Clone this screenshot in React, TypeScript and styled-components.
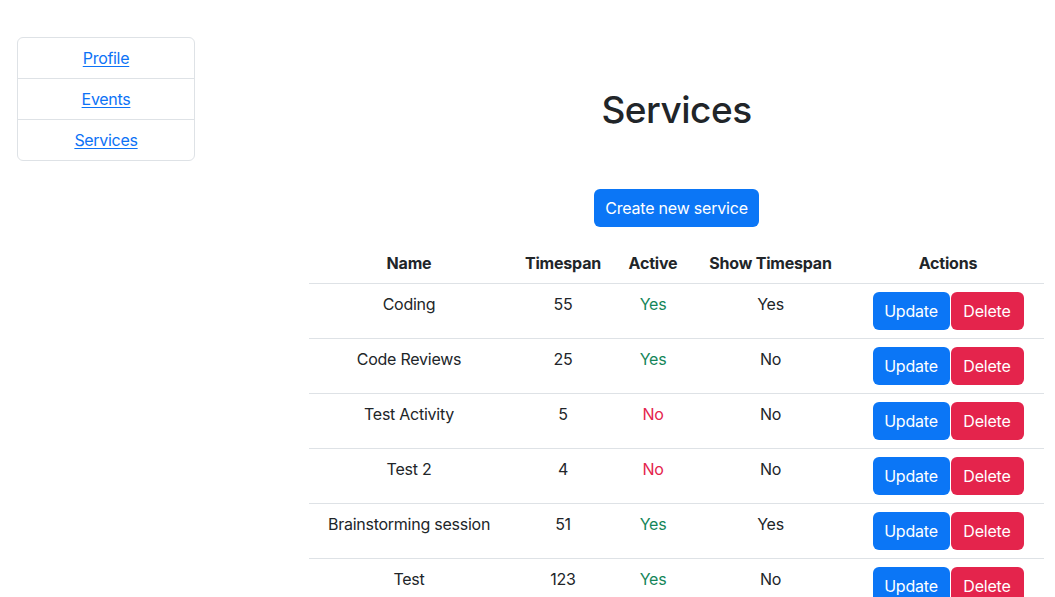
import React from 'react';
import styled, { createGlobalStyle } from 'styled-components';

const GlobalStyle = createGlobalStyle`
  html, body {
    margin: 0;
    padding: 0;
    background: #fff;
  }
  body {
    font-family: Inter, "Noto Sans", "Liberation Sans", sans-serif;
    font-size: 16px;
    line-height: 1.5;
    color: #212529;
  }
`;

type Service = {
  id: number;
  name: string;
  timespan: number;
  active: boolean;
  showTimespan: boolean;
};

const services: Service[] = [
  { id: 1, name: 'Coding', timespan: 55, active: true, showTimespan: true },
  { id: 2, name: 'Code Reviews', timespan: 25, active: true, showTimespan: false },
  { id: 3, name: 'Test Activity', timespan: 5, active: false, showTimespan: false },
  { id: 4, name: 'Test 2', timespan: 4, active: false, showTimespan: false },
  { id: 5, name: 'Brainstorming session', timespan: 51, active: true, showTimespan: true },
  { id: 6, name: 'Test', timespan: 123, active: true, showTimespan: false },
];

const navItems = ['Profile', 'Events', 'Services'];

const Page = styled.div`
  display: flex;
  align-items: flex-start;
  padding: 0 11px 0 17px;
  height: 597px;
  overflow: hidden;
`;

const SideNav = styled.ul`
  list-style: none;
  margin: 37px 0 0;
  padding: 0;
  width: 178px;
  border: 1px solid #dee2e6;
  border-radius: 6px;
  box-sizing: border-box;
`;

const SideNavItem = styled.li`
  height: 40px;
  display: flex;
  align-items: center;
  justify-content: center;

  & + & {
    border-top: 1px solid #dee2e6;
  }
`;

const NavLink = styled.a`
  color: #0d72f6;
  text-decoration: underline;
  text-underline-offset: 2px;
  font-size: 16px;
  letter-spacing: -0.3px;
`;

const Main = styled.main`
  margin-left: auto;
  width: 735px;
  display: flex;
  flex-direction: column;
  align-items: center;
`;

const Heading = styled.h1`
  margin: 86px 0 0;
  font-size: 37px;
  font-weight: 500;
  line-height: 48px;
  letter-spacing: -0.5px;
`;

const Button = styled.button<{ $variant: 'primary' | 'danger' }>`
  border: none;
  border-radius: 6px;
  height: 38px;
  padding: 0 12px;
  font-family: inherit;
  font-size: 16px;
  letter-spacing: -0.2px;
  white-space: nowrap;
  color: #fff;
  background: ${(p) => (p.$variant === 'primary' ? '#0b76f6' : '#e4244c')};
  cursor: pointer;
`;

const CreateButton = styled(Button)`
  margin-top: 55px;
  width: 165px;
  padding: 0;
`;

const Table = styled.table`
  margin-top: 16px;
  width: 735px;
  border-collapse: collapse;
  table-layout: fixed;
`;

const Th = styled.th<{ $w: number }>`
  width: ${(p) => p.$w}px;
  padding: 8px 0;
  font-weight: 700;
  letter-spacing: -0.2px;
  text-align: center;
  border-bottom: 1px solid #dee2e6;
  line-height: 24px;
`;

const Row = styled.tr`
  border-bottom: 1px solid #dee2e6;
`;

const Td = styled.td<{ $tone?: 'yes' | 'no' }>`
  padding: 8px 0;
  text-align: center;
  vertical-align: top;
  line-height: 24px;
  letter-spacing: -0.25px;
  color: ${(p) => (p.$tone === 'yes' ? '#148659' : p.$tone === 'no' ? '#e4244c' : '#212529')};
`;

const Actions = styled.div`
  display: flex;
  justify-content: center;
  gap: 1px;
`;

const UpdateButton = styled(Button)`
  width: 77px;
  padding: 0;
`;

const DeleteButton = styled(Button)`
  width: 73px;
  padding: 0;
`;

const columns = [
  { label: 'Name', w: 200 },
  { label: 'Timespan', w: 108 },
  { label: 'Active', w: 72 },
  { label: 'Show Timespan', w: 163 },
  { label: 'Actions', w: 192 },
];

const App: React.FC = () => (
  <>
    <GlobalStyle />
    <Page>
      <SideNav>
        {navItems.map((item) => (
          <SideNavItem key={item}>
            <NavLink href="#">{item}</NavLink>
          </SideNavItem>
        ))}
      </SideNav>
      <Main>
        <Heading>Services</Heading>
        <CreateButton $variant="primary">Create new service</CreateButton>
        <Table>
          <thead>
            <tr>
              {columns.map((c) => (
                <Th key={c.label} $w={c.w}>{c.label}</Th>
              ))}
            </tr>
          </thead>
          <tbody>
            {services.map((s) => (
              <Row key={s.id}>
                <Td>{s.name}</Td>
                <Td>{s.timespan}</Td>
                <Td $tone={s.active ? 'yes' : 'no'}>{s.active ? 'Yes' : 'No'}</Td>
                <Td>{s.showTimespan ? 'Yes' : 'No'}</Td>
                <Td>
                  <Actions>
                    <UpdateButton $variant="primary">Update</UpdateButton>
                    <DeleteButton $variant="danger">Delete</DeleteButton>
                  </Actions>
                </Td>
              </Row>
            ))}
          </tbody>
        </Table>
      </Main>
    </Page>
  </>
);

export default App;
